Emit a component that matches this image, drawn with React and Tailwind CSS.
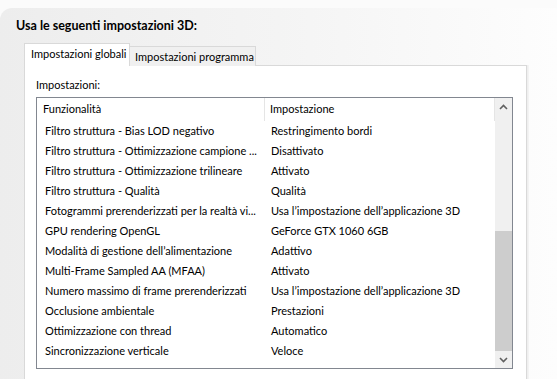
import React from "react";

const rows = [
  ["Filtro struttura - Bias LOD negativo", "Restringimento bordi"],
  ["Filtro struttura - Ottimizzazione campione ...", "Disattivato"],
  ["Filtro struttura - Ottimizzazione trilineare", "Attivato"],
  ["Filtro struttura - Qualità", "Qualità"],
  ["Fotogrammi prerenderizzati per la realtà vi...", "Usa l’impostazione dell’applicazione 3D"],
  ["GPU rendering OpenGL", "GeForce GTX 1060 6GB"],
  ["Modalità di gestione dell’alimentazione", "Adattivo"],
  ["Multi-Frame Sampled AA (MFAA)", "Attivato"],
  ["Numero massimo di frame prerenderizzati", "Usa l’impostazione dell’applicazione 3D"],
  ["Occlusione ambientale", "Prestazioni"],
  ["Ottimizzazione con thread", "Automatico"],
  ["Sincronizzazione verticale", "Veloce"],
];

const Chevron = ({ down }) => (
  <svg width="9" height="6" viewBox="0 0 9 6" className={down ? "rotate-180" : ""}>
    <path d="M1 5 L4.5 1.5 L8 5" fill="none" stroke="#606060" strokeWidth="1.6" />
  </svg>
);

export default function App() {
  return (
    <div className="w-[557px] h-[379px] overflow-hidden bg-[#fbfbfb] text-[11px] text-black font-['Lato',sans-serif]">
      <div className="mt-[8px] h-full rounded-tl-[12px] bg-gradient-to-r from-[#ededed] via-[#f4f4f4] to-[#fdfdfd]">
        {/* titolo */}
        <div className="pl-[16px] pt-[10px] h-[35px] leading-[16px] text-[12.5px] font-bold">Usa le seguenti impostazioni 3D:</div>

        {/* schede */}
        <div className="ml-[24px] flex items-end h-[23px] -mb-px relative z-10 whitespace-nowrap">
          <div className="h-[23px] w-[106px] bg-white border border-b-0 border-[#d9d9d9] pl-[6px] leading-[20px]">Impostazioni globali</div>
          <div className="h-[20px] w-[126px] bg-[#f0f0f0] border border-l-0 border-b-0 border-[#d9d9d9] pl-[5px] leading-[19px]">Impostazioni programma</div>
        </div>

        {/* pannello */}
        <div className="ml-[24px] w-[503px] h-[330px] bg-white border border-[#d9d9d9] shadow-[1px_0_0_#efefef,2px_0_0_#f3f3f3]">
          <div className="pl-[11px] pt-[11px] h-[31px] leading-[16px]">Impostazioni:</div>

          <div className="ml-[11px] w-[477px] h-[272px] border border-[#828790] flex">
            <div className="flex-1 flex flex-col">
              <div className="h-[23px] flex items-center border-r border-[#e5e5e5]">
                <div className="w-[228px] pl-[6px] h-full flex items-center border-r border-[#e5e5e5]">Funzionalità</div>
                <div className="pl-[5px]">Impostazione</div>
              </div>
              {rows.map(([a, b]) => (
                <div key={a} className="h-[20px] flex items-center whitespace-nowrap">
                  <div className="w-[226px] mr-[8px] pl-[8px] overflow-hidden">{a}</div>
                  <div>{b}</div>
                </div>
              ))}
            </div>

            {/* barra di scorrimento */}
            <div className="w-[17px] bg-[#f0f0f0] flex flex-col">
              <div className="h-[17px] flex items-center justify-center"><Chevron /></div>
              <div className="h-[116px]" />
              <div className="flex-1 bg-[#cdcdcd]" />
              <div className="h-[17px] flex items-center justify-center"><Chevron down /></div>
            </div>
          </div>
        </div>
      </div>
    </div>
  );
}
